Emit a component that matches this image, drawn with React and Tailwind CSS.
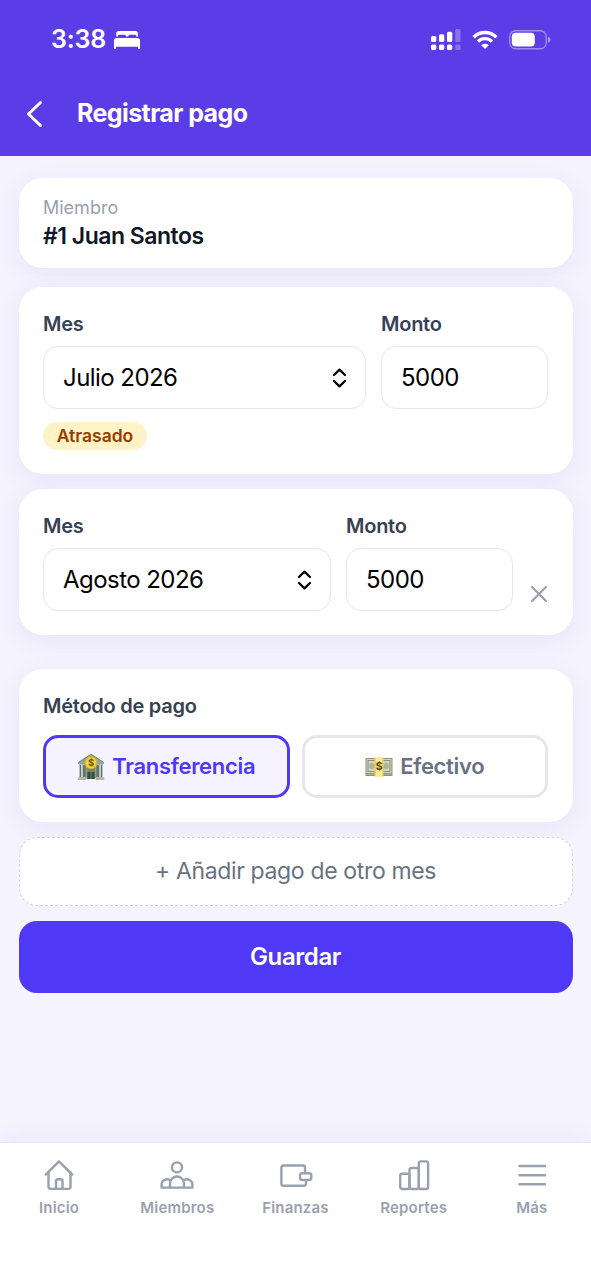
import { useState } from "react";

function BedIcon() {
  return (
    <svg width="28" height="20" viewBox="0 0 28 20" fill="currentColor">
      <path d="M3.2 6.6V3.4C3.2 1.9 4.1 1 5.6 1h16.9c1.5 0 2.4.9 2.4 2.4v3.2h-1.8V6c0-.8-.5-1.3-1.3-1.3h-5.1c-.8 0-1.3.5-1.3 1.3v.6h-2.6V6c0-.8-.5-1.3-1.3-1.3H6.300c-.8 0-1.300.5-1.300 1.300v.6z" />
      <path d="M1 18.200V10.600C1 8.900 2 7.900 3.700 7.900h20.600c1.700 0 2.700 1 2.700 2.700v7.600c0 .9-2 .9-2 0v-1.500H3v1.500c0 .9-2 .9-2 0z" />
    </svg>
  );
}

function SignalIcon() {
  return (
    <svg width="30" height="22" viewBox="0 0 30 22" fill="currentColor">
      <rect x="0" y="7" width="5.300" height="6" rx="1.500" />
      <rect x="8" y="5.200" width="5.300" height="7.800" rx="1.500" />
      <rect x="16" y="2.700" width="5.300" height="10.300" rx="1.500" />
      <rect x="24.200" y="0" width="5.300" height="13" rx="1.500" opacity="0.28" />
      <rect x="0" y="15.500" width="5.300" height="5.500" rx="1.500" />
      <rect x="8" y="15.500" width="5.300" height="5.500" rx="1.500" />
      <rect x="16" y="15.500" width="5.300" height="5.500" rx="1.500" />
      <rect x="24.200" y="15.500" width="5.300" height="5.500" rx="1.500" opacity="0.28" />
    </svg>
  );
}

function WifiIcon() {
  return (
    <svg width="26" height="20" viewBox="0 0 26 20" fill="none" stroke="currentColor">
      <path d="M1.700 7.200a16 16 0 0 1 22.600 0" strokeWidth="3.600" />
      <path d="M6 11.500a10 10 0 0 1 14 0" strokeWidth="3.400" />
      <path d="M9.200 15.200a5.600 5.600 0 0 1 7.600 0L13 19z" fill="currentColor" stroke="none" />
    </svg>
  );
}

function BatteryIcon() {
  return (
    <svg width="42" height="20" viewBox="0 0 42 20" fill="currentColor">
      <rect x="0.700" y="0.700" width="36.600" height="18" rx="6" fill="none" stroke="currentColor" strokeWidth="1.400" opacity="0.4" />
      <rect x="2.800" y="2.800" width="23" height="13.800" rx="4" />
      <path d="M39 6.700c1.600.5 2.400 1.600 2.400 3s-.8 2.500-2.400 3z" opacity="0.5" />
    </svg>
  );
}

function BankIcon() {
  return (
    <svg width="28" height="28" viewBox="0 0 28 28" className="shrink-0">
      <path d="M2 10h24v15H2z" fill="#a9b7ad" />
      <path d="M1 9.500 14 1l13 8.500V11H1z" fill="#92a49b" />
      <path d="M1.500 9.300 14 1.300l12.500 8" fill="none" stroke="#74867e" strokeWidth="1" />
      <path d="M6 12h3v12H6zM19 12h3v12h-3z" fill="#71847c" />
      <path d="M2.500 11.500h3V24h-3zM22.500 11.500h3V24h-3z" fill="#c6d0c8" />
      <path d="M3.500 12v12M24.500 12v12M7 13v11M21 13v11" stroke="#53665f" strokeWidth="0.900" />
      <path d="M9.500 15h9v11h-9z" fill="#788467" />
      <path d="M10.500 19h3v7h-3zM14.500 19h3v7h-3z" fill="#344f43" />
      <path d="M.8 24.500H9V27H.8zM19 24.500h8.200V27H19z" fill="#b2b7a0" />
      <circle cx="14" cy="9.800" r="6.200" fill="#e9c92a" stroke="#c5a52c" strokeWidth="0.800" />
      <circle cx="14" cy="9.800" r="4.500" fill="#f4d93d" />
      <text x="14" y="13.300" textAnchor="middle" fontSize="9.500" fontWeight="700" fill="#6d520d">$</text>
    </svg>
  );
}

function CashIcon() {
  return (
    <svg width="28" height="20" viewBox="0 0 28 20" className="shrink-0">
      <rect x="0.500" y="1" width="27" height="18" fill="#8f9079" />
      <rect x="1.500" y="2" width="25" height="14" fill="#d4d4bd" />
      <rect x="3" y="3.500" width="22" height="11" fill="none" stroke="#8d927c" strokeWidth="1" />
      <circle cx="7" cy="9" r="3" fill="#b1b59c" />
      <circle cx="21" cy="9" r="3" fill="#b1b59c" />
      <path d="M1 17.300h26" stroke="#c4c4aa" strokeWidth="0.700" />
      <rect x="9.500" y="0.500" width="9" height="19" fill="#f3d34b" />
      <rect x="11" y="0.500" width="6" height="19" fill="#fae998" />
      <text x="14" y="13.200" textAnchor="middle" fontSize="11" fontWeight="700" fill="#5c4a1c">$</text>
    </svg>
  );
}

const tabs = [
  {
    label: "Inicio",
    icon: (
      <>
        <path d="M4.700 17.600 18 4.400l13.300 13.200" />
        <path d="M7.500 15.500v14.300c0 1.400.7 2.100 2.100 2.100h17.800c1.400 0 2.100-.7 2.100-2.100V15.500" />
        <path d="M15 31.500v-7.300c0-1.200.7-1.900 1.900-1.900h2.700c1.200 0 1.900.7 1.900 1.900v7.300" />
      </>
    ),
  },
  {
    label: "Miembros",
    icon: (
      <>
        <circle cx="18" cy="10.400" r="5" />
        <path d="M11 30.600v-4.100a7 7 0 0 1 14 0v4.100z" />
        <path d="M11.500 23.300c-4.500-2.600-8.900.3-8.900 4.300v3h8.400M24.500 23.300c4.500-2.600 8.900.3 8.900 4.300v3H25" />
      </>
    ),
  },
  {
    label: "Finanzas",
    icon: (
      <>
        <path d="M28 16V10.500c0-1.300-.7-2-2-2H6.600c-1.400 0-2.200.8-2.200 2.200v15.800c0 1.500.8 2.300 2.200 2.300h20.200c1.400 0 2.200-.8 2.200-2.200v-3" />
        <rect x="23" y="16.300" width="11.300" height="6.700" rx="2.300" />
      </>
    ),
  },
  {
    label: "Reportes",
    icon: (
      <>
        <rect x="4.200" y="16.800" width="9.300" height="15.200" rx="2" />
        <rect x="13.500" y="11" width="9.300" height="21" rx="2" />
        <rect x="22.800" y="4.400" width="9.300" height="27.600" rx="2" />
      </>
    ),
  },
  {
    label: "Más",
    icon: <path d="M5.500 9h25.500M5.500 18.200h25.500M5.500 27.300h25.500" />,
  },
];

function MonthSelect({ value }) {
  return (
    <button className="flex h-[63px] w-full items-center justify-between rounded-[15px] border-[1.5px] border-gray-200 pl-[19px] pr-[18px] text-black">
      <span className="text-[24px] tracking-[-0.55px]">{value}</span>
      <svg width="15" height="20" viewBox="0 0 15 20" fill="none" stroke="currentColor" strokeWidth="2.300" strokeLinecap="round" strokeLinejoin="round">
        <path d="M2 7 7.500 1.700 13 7M2 13l5.500 5.300L13 13" />
      </svg>
    </button>
  );
}

function PaymentCard({ month, amount, late, onRemove }) {
  const [monto, setMonto] = useState(amount);

  return (
    <div className="rounded-[24px] bg-white px-[24.500px] pt-[24px] pb-[24px] shadow-[0_6px_24px_rgba(80,60,190,0.08)]">
      <div className="flex items-end">
        <div className="min-w-0 flex-1">
          <p className="mb-[9px] text-[20px] leading-[26px] font-semibold tracking-[-0.25px] text-gray-700">Mes</p>
          <MonthSelect value={month} />
        </div>
        <div className="ml-[15px] w-[167px]">
          <p className="mb-[9px] text-[20px] leading-[26px] font-semibold tracking-[-0.25px] text-gray-700">Monto</p>
          <input
            className="block h-[63px] w-full rounded-[15px] border-[1.5px] border-gray-200 px-[19px] text-[24px] tracking-[-0.55px] text-black outline-none"
            value={monto}
            onChange={(e) => setMonto(e.target.value)}
          />
        </div>
        {onRemove && (
          <button onClick={onRemove} className="mb-[8px] ml-[17px] text-gray-400">
            <svg width="18" height="18" viewBox="0 0 18 18" fill="none" stroke="currentColor" strokeWidth="2.200" strokeLinecap="round">
              <path d="M2 2l14 14M16 2 2 16" />
            </svg>
          </button>
        )}
      </div>
      {late && (
        <span className="mt-[13px] flex h-[28px] w-[104px] items-center justify-center rounded-full bg-amber-100 text-[17.500px] font-semibold text-amber-800">
          Atrasado
        </span>
      )}
    </div>
  );
}

export default function App() {
  const [method, setMethod] = useState("transferencia");
  const [showSecond, setShowSecond] = useState(true);

  const active = "border-indigo-600 bg-violet-50 text-indigo-600";
  const inactive = "border-gray-200 bg-white text-gray-500";

  return (
    <div className="flex h-screen flex-col overflow-hidden bg-[#f5f3fe] font-['Inter',sans-serif]">
      <header className="h-[156px] shrink-0 bg-[#5b3de8] text-white">
        <div className="flex h-[79px] items-center pl-[51px] pr-[40px]">
          <span className="text-[25px] font-semibold tracking-[-0.2px]">3:38</span>
          <span className="ml-[7px]"><BedIcon /></span>
          <div className="ml-auto flex items-center">
            <SignalIcon />
            <span className="ml-[11px]"><WifiIcon /></span>
            <span className="ml-[11px]"><BatteryIcon /></span>
          </div>
        </div>
        <div className="flex h-[70px] items-center pl-[26px]">
          <svg width="18" height="28" viewBox="0 0 18 28" fill="none" stroke="currentColor" strokeWidth="3" strokeLinecap="round" strokeLinejoin="round">
            <path d="M14.500 2.500 2.500 14l12 11.500" />
          </svg>
          <h1 className="ml-[33px] text-[25px] font-bold tracking-[-0.6px]">Registrar pago</h1>
        </div>
      </header>

      <main className="flex flex-1 flex-col px-[18.500px] pt-[22px]">
        <div className="h-[90px] rounded-[24px] bg-white px-[24.500px] pt-[18px] shadow-[0_6px_24px_rgba(80,60,190,0.08)]">
          <p className="text-[18px] leading-[24px] text-gray-400">Miembro</p>
          <p className="text-[23px] leading-[33px] font-semibold tracking-[-0.5px] text-gray-900">#1 Juan Santos</p>
        </div>

        <div className="mt-[19px] flex flex-col gap-[15px]">
          <PaymentCard month="Julio 2026" amount="5000" late />
          {showSecond && (
            <PaymentCard month="Agosto 2026" amount="5000" onRemove={() => setShowSecond(false)} />
          )}
        </div>

        <div className="mt-[34px] h-[153px] rounded-[24px] bg-white px-[24.500px] pt-[24px] shadow-[0_6px_24px_rgba(80,60,190,0.08)]">
          <p className="mb-[16px] text-[20px] leading-[26px] font-semibold tracking-[-0.25px] text-gray-700">Método de pago</p>
          <div className="grid grid-cols-2 gap-[12px]">
            <button
              onClick={() => setMethod("transferencia")}
              className={`flex h-[63px] items-center justify-center gap-[7px] rounded-[15px] border-[3px] text-[22px] font-semibold tracking-[-0.3px] ${method === "transferencia" ? active : inactive}`}
            >
              <BankIcon />
              Transferencia
            </button>
            <button
              onClick={() => setMethod("efectivo")}
              className={`flex h-[63px] items-center justify-center gap-[7px] rounded-[15px] border-[3px] text-[22px] font-semibold tracking-[-0.3px] ${method === "efectivo" ? active : inactive}`}
            >
              <CashIcon />
              Efectivo
            </button>
          </div>
        </div>

        <button className="mt-[15px] h-[69px] rounded-[18px] border-[1.500px] border-dashed border-gray-300 bg-white text-[23px] tracking-[-0.35px] text-gray-500">
          + Añadir pago de otro mes
        </button>
        <button className="mt-[15px] h-[72px] rounded-[18px] bg-indigo-600 text-[24px] font-semibold tracking-[-0.4px] text-white">
          Guardar
        </button>
      </main>

      <nav className="grid h-[138px] shrink-0 grid-cols-5 border-t border-gray-200 bg-white pt-[14px] shadow-[0_-4px_20px_rgba(80,60,190,0.06)]">
        {tabs.map((tab) => (
          <a key={tab.label} className="flex flex-col items-center text-gray-400">
            <svg width="36" height="36" viewBox="0 0 36 36" fill="none" stroke="currentColor" strokeWidth="2.400" strokeLinecap="round" strokeLinejoin="round">
              {tab.icon}
            </svg>
            <span className="mt-[5px] text-[15px] leading-[20px] font-semibold tracking-[0.2px]">{tab.label}</span>
          </a>
        ))}
      </nav>
    </div>
  );
}
